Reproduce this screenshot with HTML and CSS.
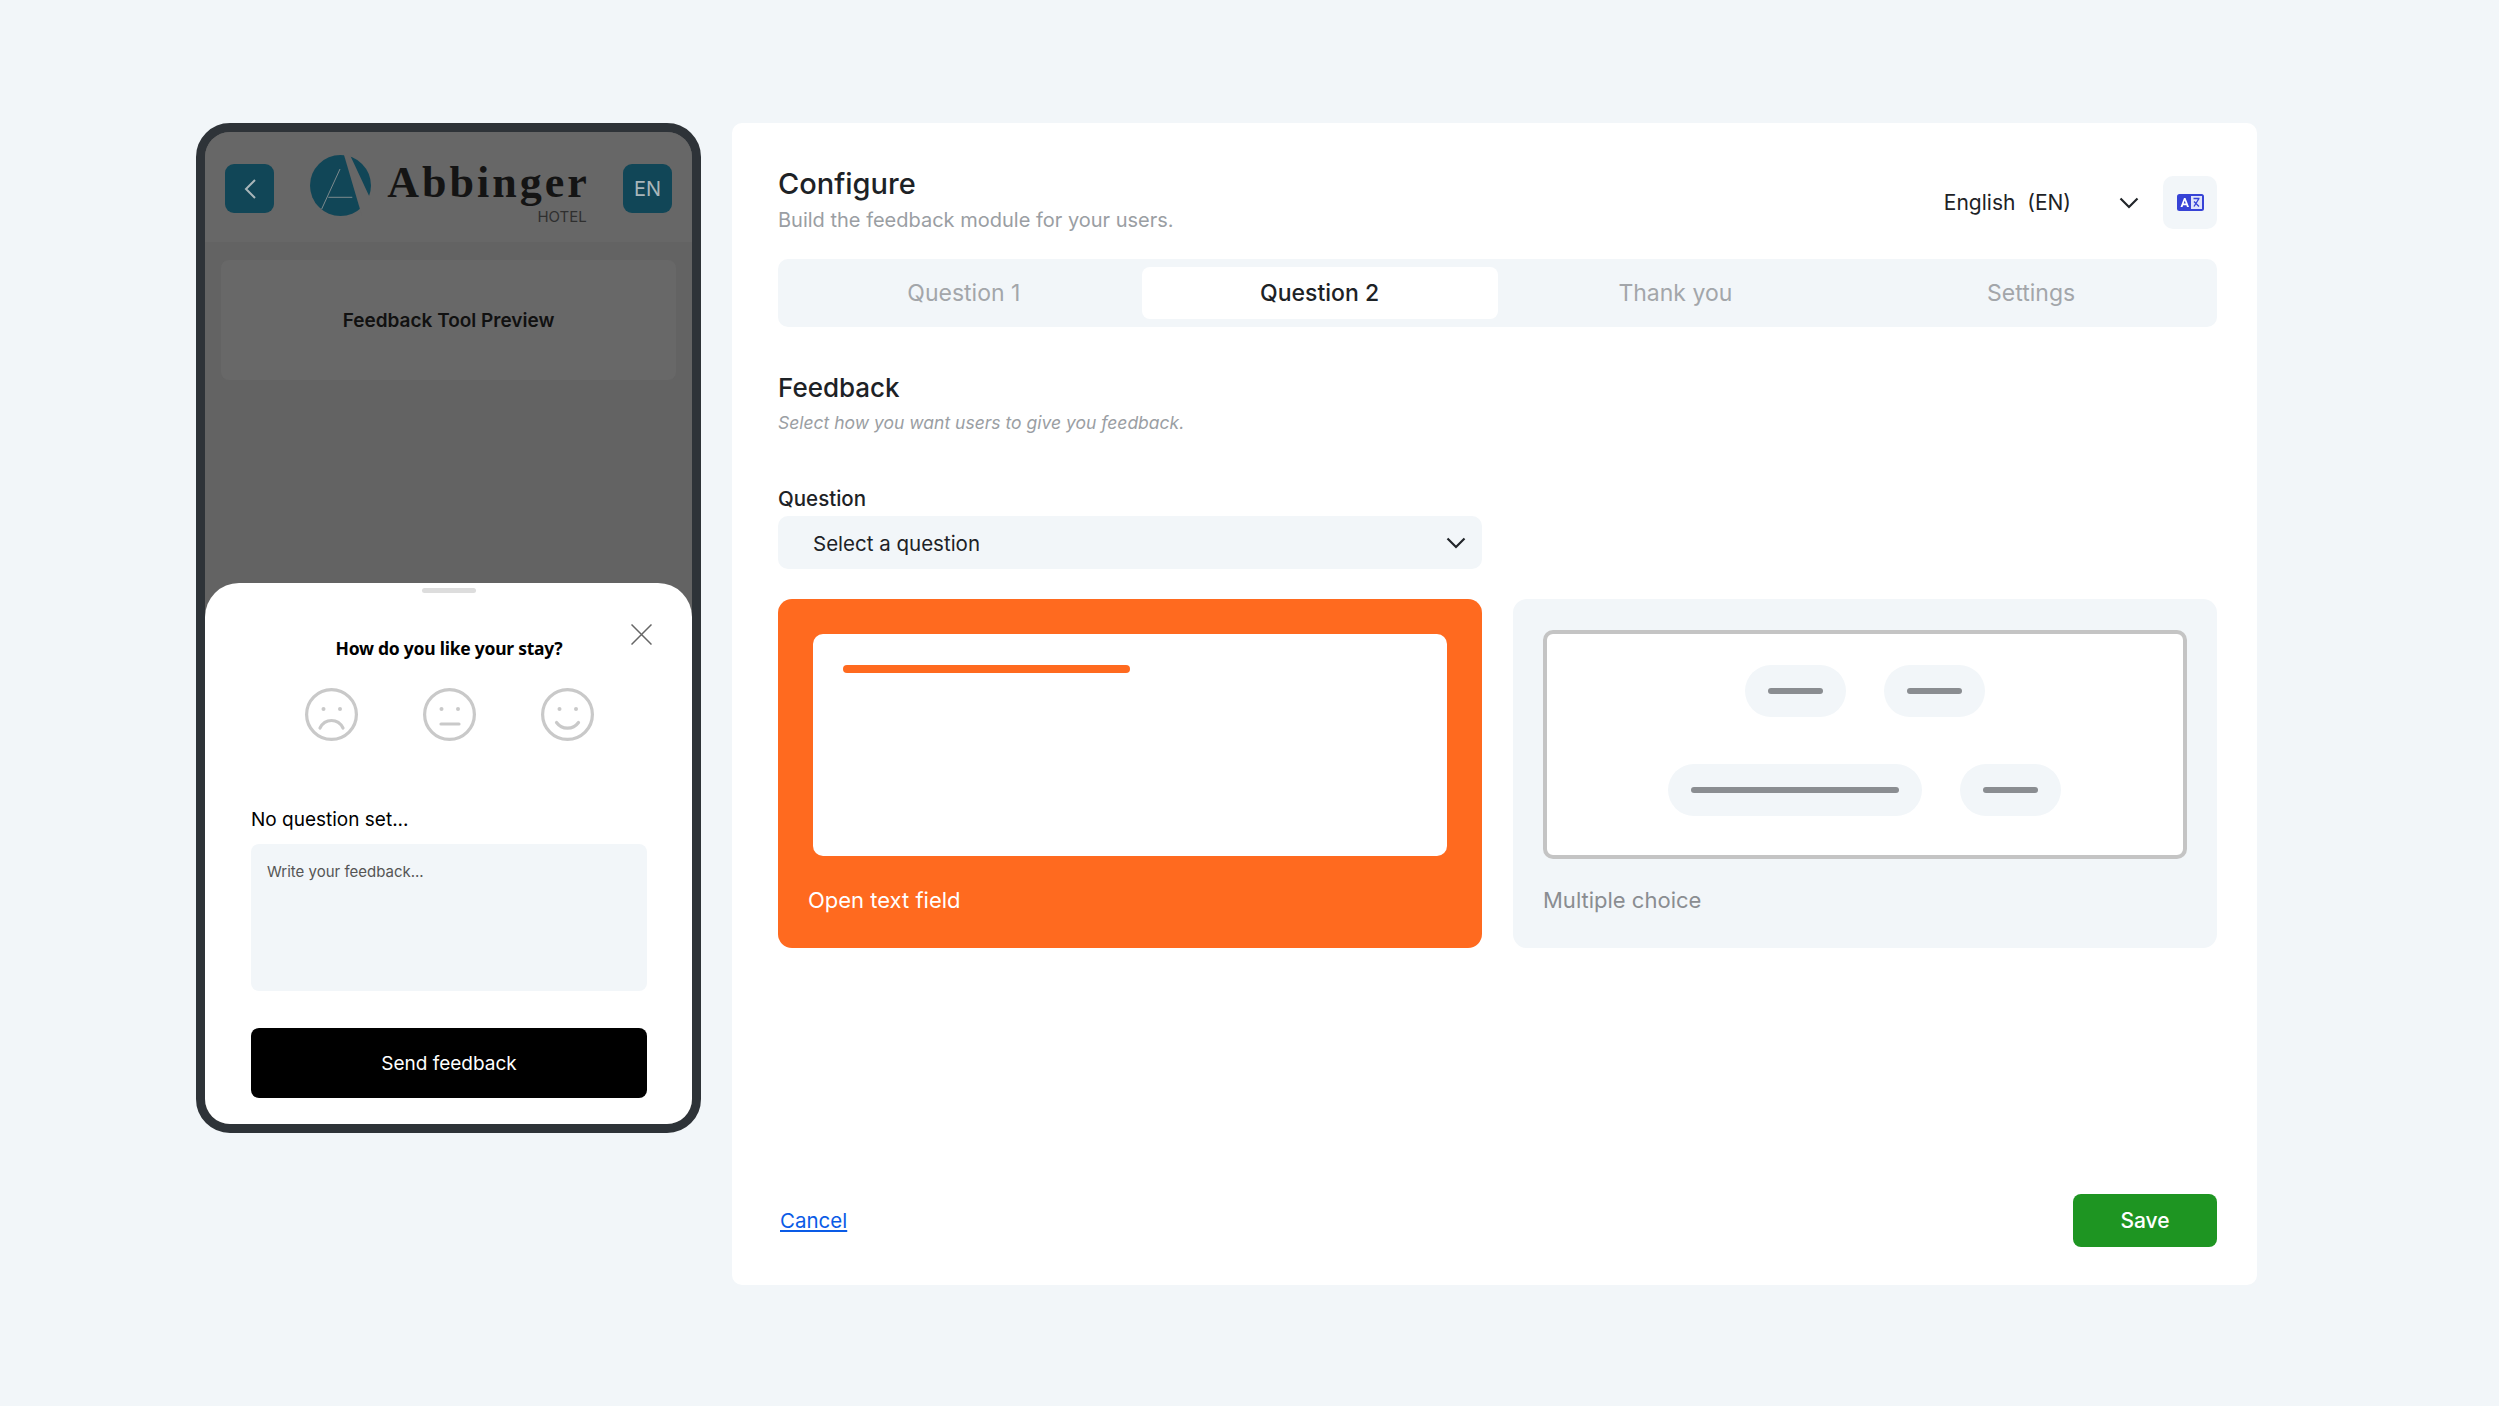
FILE: index.html
```html
<!DOCTYPE html>
<html lang="en">
<head>
    <meta charset="UTF-8" />
    <title>Configure feedback</title>
    <link rel="stylesheet" href="styles.css">
</head>
<body>
    <div class="page">
        <div class="phone">
            <div class="phoneTop">
                <div class="hotelBar">
                    <div class="squareBtn">
                        <svg width="14" height="22" viewBox="0 0 14 22" fill="none" stroke="#a9b6ba" stroke-width="2"><path d="M12 2 3 11l9 9"/></svg>
                    </div>
                    <div class="logo">
                        <svg class="logoMark" width="61" height="61" viewBox="0 0 61 61">
                            <circle cx="30.500" cy="30.500" r="30.500" fill="#114657"/>
                            <path d="M34 0 40 0 61 45 61 61 52 61Z" fill="#676767"/>
                            <path d="M30 14 11.700 54M18.300 42.300H42.300" stroke="#7d8a8e" stroke-width="1" fill="none"/>
                        </svg>
                        <div class="logoText">
                            <span class="logoName">Abbinger</span>
                            <span class="logoSub">HOTEL</span>
                        </div>
                    </div>
                    <div class="squareBtn langBtn">EN</div>
                </div>
                <div class="previewCard">Feedback Tool Preview</div>
            </div>
            <div class="sheet">
                <div class="handle"></div>
                <svg class="closeIcon" width="21" height="21" viewBox="0 0 21 21" stroke="#666" stroke-width="1.5"><path d="M.5.5l20 20M20.500.5l-20 20"/></svg>
                <h4 class="sheetTitle">How do you like your stay?</h4>
                <div class="faces">
                    <svg width="53" height="53" viewBox="0 0 53 53" fill="none" stroke="#c9c9c9" stroke-width="3.200" stroke-linecap="round">
                        <circle cx="26.500" cy="26.500" r="24.900"/>
                        <circle cx="18.500" cy="21" r="2" fill="#c9c9c9" stroke="none"/>
                        <circle cx="35" cy="21" r="2" fill="#c9c9c9" stroke="none"/>
                        <path d="M15 40C20 30 33 30 38 40"/>
                    </svg>
                    <svg width="53" height="53" viewBox="0 0 53 53" fill="none" stroke="#c9c9c9" stroke-width="3.200" stroke-linecap="round">
                        <circle cx="26.500" cy="26.500" r="24.900"/>
                        <circle cx="18.500" cy="21" r="2" fill="#c9c9c9" stroke="none"/>
                        <circle cx="35" cy="21" r="2" fill="#c9c9c9" stroke="none"/>
                        <path d="M18 36H36"/>
                    </svg>
                    <svg width="53" height="53" viewBox="0 0 53 53" fill="none" stroke="#c9c9c9" stroke-width="3.200" stroke-linecap="round">
                        <circle cx="26.500" cy="26.500" r="24.900"/>
                        <circle cx="18.500" cy="21" r="2" fill="#c9c9c9" stroke="none"/>
                        <circle cx="35" cy="21" r="2" fill="#c9c9c9" stroke="none"/>
                        <path d="M15.500 34.500C21 42 32 42 37.500 34.500"/>
                    </svg>
                </div>
                <div class="sheetQuestion">No question set...</div>
                <div class="feedbackBox">Write your feedback...</div>
                <button class="sendBtn">Send feedback</button>
            </div>
        </div>

        <div class="panel">
            <div class="panelHead">
                <div>
                    <h1>Configure</h1>
                    <p class="subtitle">Build the feedback module for your users.</p>
                </div>
                <div class="langPick">
                    <span class="langName">English&nbsp; (EN)</span>
                    <svg width="20" height="12" viewBox="0 0 20 12" fill="none" stroke="#22262a" stroke-width="2.200"><path d="M1.500 1.500 10 10l8.500-8.500"/></svg>
                    <div class="langIcon">
                        <svg width="27" height="17" viewBox="0 0 27 17">
                            <rect width="27" height="17" rx="2.500" fill="#3743d6"/>
                            <rect x="14" y="2" width="11" height="13" fill="#dfe3fa"/>
                            <path d="M3.500 13 7 4h1.500L12 13h-2l-.6-1.800H6.100L5.500 13ZM6.700 9.500h2.100L7.750 6.500Z" fill="#fff" fill-rule="evenodd"/>
                            <path d="M16.500 4.500h6M22 4.500l-5 8M17 7.500l5 5" stroke="#3743d6" stroke-width="1.400" fill="none"/>
                        </svg>
                    </div>
                </div>
            </div>

            <div class="tabs">
                <div class="tab">Question 1</div>
                <div class="tab active">Question 2</div>
                <div class="tab">Thank you</div>
                <div class="tab">Settings</div>
            </div>

            <h2>Feedback</h2>
            <p class="hint">Select how you want users to give you feedback.</p>

            <label class="fieldLabel">Question</label>
            <div class="selectBox">
                <span class="selectText">Select a question</span>
                <svg width="20" height="12" viewBox="0 0 20 12" fill="none" stroke="#22262a" stroke-width="2.200"><path d="M1.500 1.500 10 10l8.500-8.500"/></svg>
            </div>

            <div class="typeCards">
                <div class="typeCard selected">
                    <div class="openFrame"><div class="openLine"></div></div>
                    <div class="typeName">Open text field</div>
                </div>
                <div class="typeCard">
                    <div class="choiceFrame">
                        <div class="pillRow">
                            <div class="pill"><div class="pillLine"></div></div>
                            <div class="pill"><div class="pillLine"></div></div>
                        </div>
                        <div class="pillRow">
                            <div class="pill"><div class="pillLine long"></div></div>
                            <div class="pill"><div class="pillLine"></div></div>
                        </div>
                    </div>
                    <div class="typeName">Multiple choice</div>
                </div>
            </div>

            <div class="panelFoot">
                <a href="#" class="cancelLink">Cancel</a>
                <button class="saveBtn">Save</button>
            </div>
        </div>
    </div>
</body>
</html>
```

FILE: styles.css
```css
html, body {
    height: 100%;
}

body {
    margin: 0;
    background: #f2f6f9;
    font-family: 'Inter', 'Noto Sans', sans-serif;
    color: #1d2226;
}

.page {
    display: flex;
    align-items: flex-start;
    gap: 31px;
    padding: 123px 242px 0 196px;
}

/* phone preview */
.phone {
    flex: none;
    display: flex;
    flex-direction: column;
    justify-content: space-between;
    width: 505px;
    height: 1010px;
    box-sizing: border-box;
    border: 9px solid #2e3338;
    border-radius: 34px;
    background: #636363;
    overflow: hidden;
}

.hotelBar {
    display: flex;
    align-items: center;
    justify-content: space-between;
    height: 110px;
    padding: 0 20px;
    background: #676767;
    box-sizing: border-box;
}

.squareBtn {
    display: flex;
    align-items: center;
    justify-content: center;
    width: 49px;
    height: 49px;
    margin-top: 3px;
    border-radius: 9px;
    background: #114657;
}

.langBtn {
    color: #a9b6ba;
    font-size: 20px;
}

.logo {
    display: flex;
    align-items: flex-start;
    gap: 16px;
    margin-top: 5px;
}

.logoText {
    display: flex;
    flex-direction: column;
    align-items: flex-end;
    margin-top: 6px;
}

.logoName {
    font-family: 'Liberation Serif', serif;
    font-weight: bold;
    font-size: 44px;
    line-height: 44px;
    letter-spacing: 3px;
    margin-right: -3px;
    color: #141414;
}

.logoSub {
    margin-top: 5px;
    font-size: 15px;
    line-height: 14px;
    color: #2f2f2f;
}

.previewCard {
    display: flex;
    align-items: center;
    justify-content: center;
    height: 120px;
    margin: 18px 16px 0;
    border-radius: 8px;
    background: #686868;
    color: #111;
    font-size: 19px;
    font-weight: 600;
}

.sheet {
    position: relative;
    height: 541px;
    box-sizing: border-box;
    padding: 5px 45px 0 46px;
    border-radius: 34px 34px 0 0;
    background: #fff;
}

.handle {
    width: 54px;
    height: 5px;
    margin: 0 auto;
    border-radius: 3px;
    background: #ddd;
}

.closeIcon {
    position: absolute;
    top: 41px;
    right: 40px;
}

.sheetTitle {
    margin: 42px 0 0;
    font-family: 'Noto Sans', sans-serif;
    font-size: 17.5px;
    line-height: 26px;
    letter-spacing: -0.25px;
    font-weight: 700;
    text-align: center;
    color: #000;
}

.faces {
    display: flex;
    justify-content: center;
    gap: 65px;
    margin-top: 27px;
}

.sheetQuestion {
    margin-top: 66px;
    font-size: 19px;
    line-height: 26px;
    color: #000;
}

.feedbackBox {
    height: 147px;
    box-sizing: border-box;
    margin-top: 11px;
    padding: 18px 16px;
    border-radius: 8px;
    background: #f2f6f9;
    color: #555;
    font-size: 15px;
    line-height: 20px;
}

.sendBtn {
    display: block;
    width: 100%;
    height: 70px;
    margin-top: 37px;
    border: 0;
    border-radius: 8px;
    background: #000;
    color: #fff;
    font-family: inherit;
    font-size: 19px;
}

/* config panel */
.panel {
    flex: 1;
    height: 1162px;
    box-sizing: border-box;
    display: flex;
    flex-direction: column;
    padding: 42px 40px 38px 46px;
    border-radius: 10px;
    background: #fff;
}

.panelHead {
    display: flex;
    justify-content: space-between;
    align-items: flex-start;
    height: 94px;
}

h1 {
    margin: 1px 0 0;
    font-size: 29px;
    line-height: 36px;
    font-weight: 500;
}

.subtitle {
    margin: 5px 0 0;
    font-size: 20px;
    line-height: 26px;
    color: #9a9ea3;
}

.langPick {
    display: flex;
    align-items: center;
    margin-top: 11px;
}

.langName {
    margin-right: 48px;
    font-size: 21px;
}

.langIcon {
    display: flex;
    align-items: center;
    justify-content: center;
    width: 54px;
    height: 53px;
    margin-left: 24px;
    border-radius: 10px;
    background: #f2f6f9;
}

.tabs {
    display: grid;
    grid-template-columns: repeat(4, 1fr);
    padding: 8px;
    border-radius: 10px;
    background: #f2f6f9;
}

.tab {
    height: 52px;
    display: flex;
    align-items: center;
    justify-content: center;
    border-radius: 8px;
    font-size: 23px;
    color: #a3a6aa;
}

.tab.active {
    background: #fff;
    color: #1d2226;
    font-weight: 500;
}

h2 {
    margin: 44px 0 0;
    font-size: 26px;
    line-height: 34px;
    font-weight: 500;
}

.hint {
    margin: 6px 0 0;
    font-size: 17.5px;
    line-height: 24px;
    font-style: italic;
    color: #9a9ea3;
}

.fieldLabel {
    margin-top: 51px;
    font-size: 20.5px;
    line-height: 26px;
    font-weight: 500;
}

.selectBox {
    display: flex;
    align-items: center;
    justify-content: space-between;
    width: 704px;
    height: 53px;
    box-sizing: border-box;
    padding: 0 16px 0 35px;
    margin-top: 4px;
    border-radius: 10px;
    background: #f2f6f9;
    font-size: 20.5px;
}

.selectText {
    margin-top: 2px;
}

.typeCards {
    display: grid;
    grid-template-columns: 704px 704px;
    column-gap: 31px;
    margin-top: 30px;
}

.typeCard {
    height: 349px;
    box-sizing: border-box;
    padding: 31px 30px 0;
    border-radius: 14px;
    background: #f2f6f9;
}

.typeCard.selected {
    background: #ff6a1f;
    padding: 35px 35px 0;
}

.openFrame {
    height: 222px;
    box-sizing: border-box;
    padding: 31px 30px;
    border-radius: 10px;
    background: #fff;
}

.openLine {
    width: 287px;
    height: 8px;
    border-radius: 4px;
    background: #ff6a1f;
}

.choiceFrame {
    display: flex;
    flex-direction: column;
    gap: 47px;
    height: 229px;
    box-sizing: border-box;
    padding: 31px 1px 0 0;
    border: 4px solid #c4c4c4;
    border-radius: 10px;
    background: #fff;
}

.pillRow {
    display: flex;
    justify-content: center;
    gap: 38px;
}

.pill {
    display: flex;
    align-items: center;
    height: 52px;
    padding: 0 23px;
    border-radius: 26px;
    background: #f2f6f9;
}

.pillLine {
    width: 55px;
    height: 6px;
    border-radius: 3px;
    background: #8a8d91;
}

.pillLine.long {
    width: 208px;
}

.typeName {
    margin-top: 27px;
    font-size: 22px;
    line-height: 28px;
    color: #8a8d91;
}

.selected .typeName {
    margin-left: -5px;
    margin-top: 30px;
    color: #fff;
}

.panelFoot {
    display: flex;
    justify-content: space-between;
    align-items: center;
    margin-top: auto;
}

.cancelLink {
    margin-left: 2px;
    font-size: 20.5px;
    color: #0a5be6;
}

.saveBtn {
    width: 144px;
    height: 53px;
    border: 0;
    border-radius: 8px;
    background: #1e9522;
    color: #fff;
    font-family: inherit;
    font-size: 21px;
    font-weight: 500;
}
```
